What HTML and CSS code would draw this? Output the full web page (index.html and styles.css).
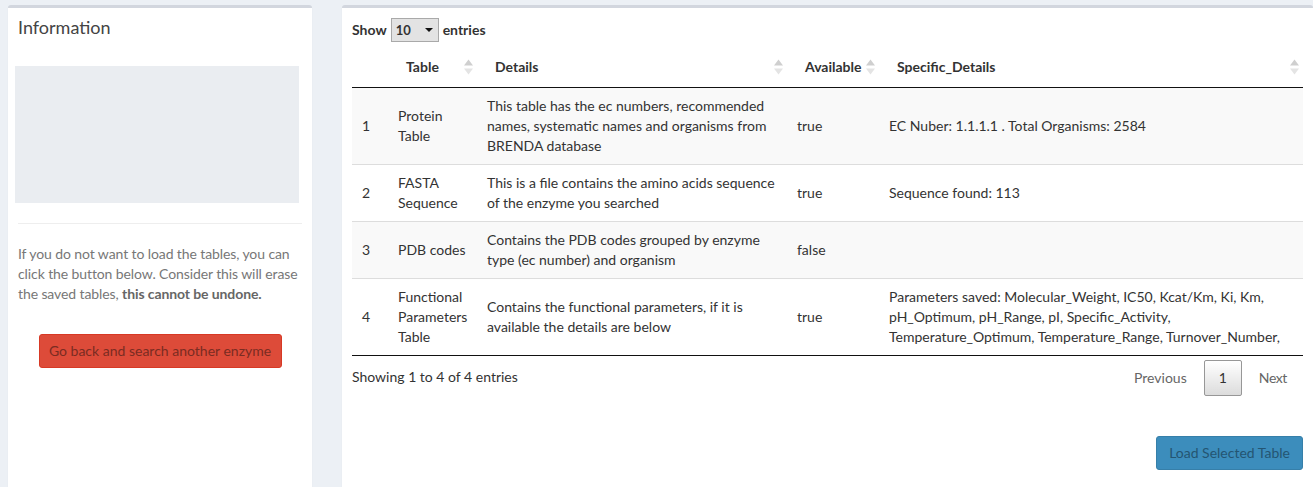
FILE: index.html
```html
<!DOCTYPE html>
<html>
<head>
<meta charset="utf-8">
<title>Tables</title>
<link rel="stylesheet" href="styles.css">
</head>
<body>
<div class="page">
  <aside class="box side">
    <div class="box-header"><h3 class="box-title">Information</h3></div>
    <div class="box-body">
      <div class="plot"></div>
      <hr class="sep">
      <p class="note">If you do not want to load the tables, you can<br>click the button below. Consider this will erase<br>the saved tables, <b>this cannot be undone.</b></p>
      <div class="btn-row"><button class="btn btn-danger">Go back and search another enzyme</button></div>
    </div>
  </aside>
  <main class="box main">
    <div class="dt-length">
      <span class="lbl">Show</span>
      <span class="select">10<span class="caret"></span></span>
      <span class="lbl">entries</span>
    </div>
    <table class="dt">
      <colgroup>
        <col class="c-idx"><col class="c-table"><col class="c-details"><col class="c-avail"><col class="c-spec">
      </colgroup>
      <thead>
        <tr>
          <th class="th-idx"></th>
          <th><div class="th-in"><span>Table</span><svg class="sort" viewBox="0 0 9 16" width="9" height="16"><polygon points="0,6.5 4.5,0.5 9,6.5" fill="#cfcfcf"/><polygon points="0,9.5 4.5,15.5 9,9.5" fill="#e4e4e4"/></svg></div></th>
          <th><div class="th-in"><span>Details</span><svg class="sort" viewBox="0 0 9 16" width="9" height="16"><polygon points="0,6.5 4.5,0.5 9,6.5" fill="#cfcfcf"/><polygon points="0,9.5 4.5,15.5 9,9.5" fill="#e4e4e4"/></svg></div></th>
          <th><div class="th-in"><span>Available</span><svg class="sort" viewBox="0 0 9 16" width="9" height="16"><polygon points="0,6.5 4.5,0.5 9,6.5" fill="#cfcfcf"/><polygon points="0,9.5 4.5,15.5 9,9.5" fill="#e4e4e4"/></svg></div></th>
          <th><div class="th-in"><span>Specific_Details</span><svg class="sort" viewBox="0 0 9 16" width="9" height="16"><polygon points="0,6.5 4.5,0.5 9,6.5" fill="#cfcfcf"/><polygon points="0,9.5 4.5,15.5 9,9.5" fill="#e4e4e4"/></svg></div></th>
        </tr>
      </thead>
      <tbody>
        <tr class="odd">
          <td>1</td>
          <td>Protein<br>Table</td>
          <td>This table has the ec numbers, recommended<br>names, systematic names and organisms from<br>BRENDA database</td>
          <td>true</td>
          <td>EC Nuber: 1.1.1.1 . Total Organisms: 2584</td>
        </tr>
        <tr>
          <td>2</td>
          <td>FASTA<br>Sequence</td>
          <td>This is a file contains the amino acids sequence<br>of the enzyme you searched</td>
          <td>true</td>
          <td>Sequence found: 113</td>
        </tr>
        <tr class="odd">
          <td>3</td>
          <td>PDB codes</td>
          <td>Contains the PDB codes grouped by enzyme<br>type (ec number) and organism</td>
          <td>false</td>
          <td></td>
        </tr>
        <tr class="last">
          <td>4</td>
          <td>Functional<br>Parameters<br>Table</td>
          <td>Contains the functional parameters, if it is<br>available the details are below</td>
          <td>true</td>
          <td>Parameters saved: Molecular_Weight, IC50, Kcat/Km, Ki, Km,<br>pH_Optimum, pH_Range, pI, Specific_Activity,<br>Temperature_Optimum, Temperature_Range, Turnover_Number,</td>
        </tr>
      </tbody>
    </table>
    <div class="dt-footer">
      <div class="dt-info">Showing 1 to 4 of 4 entries</div>
      <div class="dt-paginate">
        <span class="pg disabled">Previous</span>
        <span class="pg current">1</span>
        <span class="pg disabled">Next</span>
      </div>
    </div>
    <div class="actions"><button class="btn btn-primary">Load Selected Table</button></div>
  </main>
</div>
</body>
</html>
```

FILE: styles.css
```css
* { box-sizing: border-box; }
html, body { margin: 0; height: 100%; }
body {
  background: #ecf0f5;
  font-family: Lato, "Noto Sans", sans-serif;
  font-size: 14px;
  line-height: 20px;
  color: #333;
  overflow: hidden;
}
.page {
  display: flex;
  gap: 30px;
  padding: 5px 0 0 8px;
  height: 100%;
}
.box {
  background: #fff;
  border-top: 3px solid #d2d6de;
  border-radius: 3px 3px 0 0;
  box-shadow: 0 1px 1px rgba(0,0,0,0.1);
}
.side { width: 304px; flex: none; }
.main { flex: 1; padding: 10px; min-width: 0; }

.box-header { padding: 9px 10px 11px; }
.box-title {
  margin: 0;
  font-size: 18px;
  line-height: 20px;
  font-weight: normal;
  color: #444;
}
.box-body { padding: 0 10px 10px; }
.plot {
  margin: 18px 3px 0 -3px;
  height: 137px;
  background: #eaedf1;
}
.sep {
  margin: 20px 0 0;
  border: 0;
  border-top: 1px solid #eee;
}
.note {
  margin: 20px 0 0;
  color: #777;
  letter-spacing: -0.1px;
}
.note b { color: #666; }
.btn-row { display: flex; justify-content: center; margin-top: 30px; }
.btn {
  font-family: inherit;
  font-size: 14px;
  line-height: 20px;
  padding: 6px 12px;
  border-radius: 3px;
  border: 1px solid transparent;
  white-space: nowrap;
}
.btn-danger {
  width: 243px;
  padding: 6px 0;
  background: #dd4b39;
  border-color: #d73925;
  color: #7a2c22;
}
.btn-primary {
  background: #3c8dbc;
  border-color: #367fa9;
  color: #245572;
  padding: 6px 12px;
}

.dt-length {
  display: flex;
  align-items: center;
  gap: 4px;
  height: 24px;
  font-weight: bold;
}
.select {
  display: inline-flex;
  align-items: center;
  justify-content: space-between;
  width: 48px;
  height: 24px;
  padding: 0 5px 0 4px;
  background: #e3e3e3;
  border: 1px solid #a9a9a9;
  font-weight: bold;
  font-size: 13px;
}
.caret {
  width: 0; height: 0;
  border-left: 4px solid transparent;
  border-right: 4px solid transparent;
  border-top: 4px solid #111;
}

.dt {
  margin-top: 5px;
  width: 951px;
  table-layout: fixed;
  border-collapse: separate;
  border-spacing: 0;
}
.c-idx { width: 36px; }
.c-table { width: 89px; }
.c-details { width: 310px; }
.c-avail { width: 92px; }
.c-spec { width: 424px; }
.dt th {
  padding: 10px 4px 10px 18px;
  text-align: left;
  font-weight: bold;
  border-bottom: 1px solid #111;
}
.dt th.th-idx { padding-left: 10px; }
.th-in {
  display: flex;
  justify-content: space-between;
  align-items: center;
}
.sort { flex: none; }
.dt td {
  padding: 8px 10px;
  vertical-align: middle;
  border-top: 1px solid #ddd;
  white-space: nowrap;
  overflow: hidden;
}
.dt tbody tr:first-child td { border-top: 0; }
.dt tr.odd td { background: #f9f9f9; }
.dt tr.last td { border-bottom: 1px solid #111; }

.dt-footer {
  display: flex;
  justify-content: space-between;
  align-items: flex-start;
}
.dt-info { padding-top: 11px; }
.dt-paginate { display: flex; padding-top: 4px; }
.pg {
  padding: 7px 14px;
  margin-left: 2px;
  border: 1px solid transparent;
  border-radius: 2px;
}
.pg.disabled { color: #666; }
.pg.current {
  color: #333;
  border-color: #979797;
  background: linear-gradient(to bottom, #fff 0%, #dcdcdc 100%);
}
.pg:last-child { padding-right: 15px; letter-spacing: -0.4px; }
.actions {
  display: flex;
  justify-content: flex-end;
  margin-top: 40px;
}
```
